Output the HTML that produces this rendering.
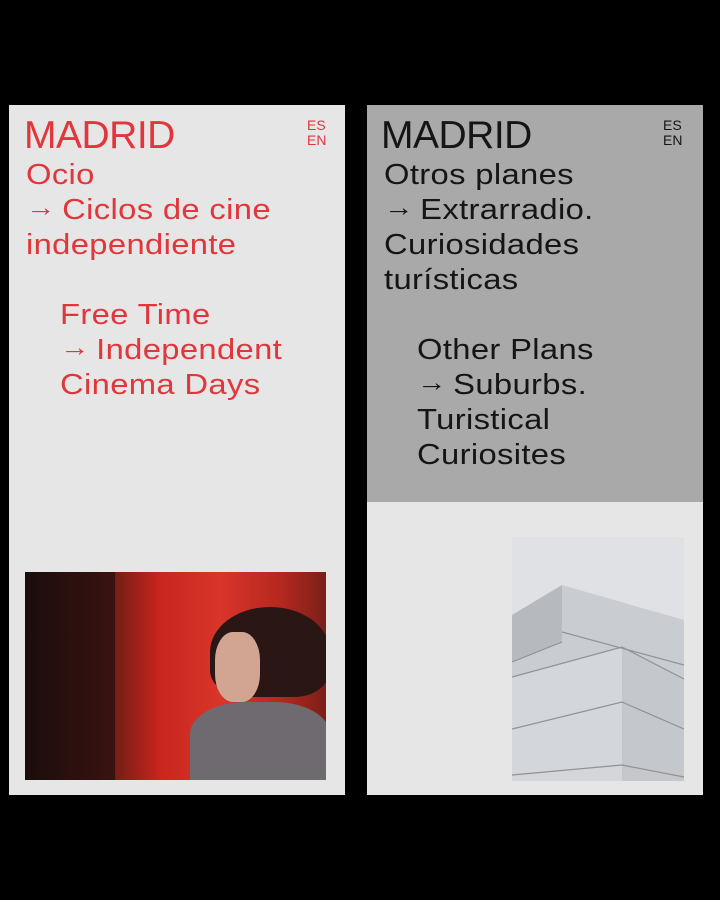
<!DOCTYPE html>
<html><head><meta charset="utf-8"><style>
*{margin:0;padding:0}
body{width:720px;height:900px;background:#000;position:relative;overflow:hidden;font-family:"Liberation Sans",sans-serif}
.card{position:absolute;top:105px;width:336px;height:690px;background:#e6e6e6}
.t{position:absolute;white-space:nowrap;font-size:29px;line-height:35px;letter-spacing:0.3px;transform:scaleX(1.13);transform-origin:0 0}
.a{position:relative;top:-3px;font-size:26px;letter-spacing:6px}
.h{position:absolute;font-size:39px;line-height:40px;letter-spacing:-0.5px}
.l{position:absolute;font-size:14px;line-height:15px}
</style></head><body>
<div class="card" style="left:9px">
  <div class="h" style="left:15px;top:11px;color:#e0363c">MADRID</div>
  <div class="l" style="left:298px;top:13px;color:#e0363c">ES<br>EN</div>
  <div class="t" style="left:17px;top:53px;color:#e0363c">Ocio<br><span class="a">→</span>Ciclos de cine<br>independiente</div>
  <div class="t" style="left:51px;top:193px;color:#e0363c">Free Time<br><span class="a">→</span>Independent<br>Cinema Days</div>
  <div style="position:absolute;left:16px;top:467px;width:301px;height:208px;overflow:hidden;background:linear-gradient(90deg,#2a1512 0%,#5a1a14 25%,#c8261e 45%,#d9352a 65%,#b5281f 85%,#7a2018 100%)">
    <div style="position:absolute;left:0;top:0;width:90px;height:208px;background:linear-gradient(90deg,#1a0e0c,#3a1210)"></div>
    <div style="position:absolute;left:185px;top:35px;width:120px;height:90px;border-radius:50% 50% 30% 30%;background:#2a1614"></div>
    <div style="position:absolute;left:190px;top:60px;width:45px;height:70px;border-radius:40%;background:#d2a592"></div>
    <div style="position:absolute;left:165px;top:130px;width:140px;height:80px;border-radius:40% 40% 0 0;background:#6e6a70"></div>
  </div>
</div>
<div class="card" style="left:367px">
  <div style="position:absolute;left:0;top:0;width:336px;height:397px;background:#a9a9a9"></div>
  <div class="h" style="left:14px;top:11px;color:#151515">MADRID</div>
  <div class="l" style="left:296px;top:13px;color:#151515">ES<br>EN</div>
  <div class="t" style="left:17px;top:53px;color:#151515">Otros planes<br><span class="a">→</span>Extrarradio.<br>Curiosidades<br>turísticas</div>
  <div class="t" style="left:50px;top:228px;color:#151515">Other Plans<br><span class="a">→</span>Suburbs.<br>Turistical<br>Curiosites</div>
  <svg style="position:absolute;left:145px;top:432px" width="172" height="244" viewBox="0 0 172 244">
    <rect width="172" height="244" fill="#dfe1e4"/>
    <polygon points="0,78 50,48 172,83 172,244 0,244" fill="#c9cdd2"/>
    <polygon points="0,78 50,48 50,105 0,125" fill="#b6babf"/>
    <polygon points="0,140 110,110 172,142 172,244 0,244" fill="#d3d6da"/>
    <polygon points="110,110 172,142 172,244 110,244" fill="#c4c8cd"/>
    <g stroke="#8e9399" stroke-width="1.2" fill="none">
      <path d="M0,140 L110,110 L172,142"/><path d="M0,192 L110,165 L172,192"/><path d="M0,238 L110,228 L172,240"/>
      <path d="M50,95 L172,128"/><path d="M0,125 L50,105"/>
    </g>
  </svg>
</div>
</body></html>
